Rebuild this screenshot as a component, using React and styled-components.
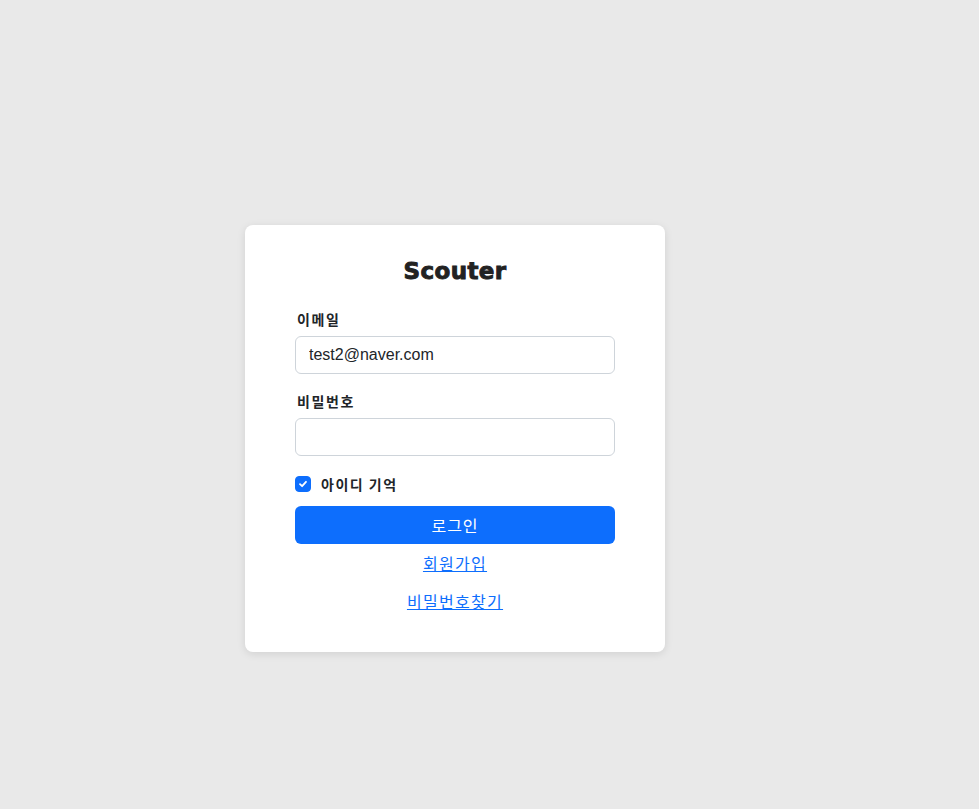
import React, { useState } from 'react'
import styled, { createGlobalStyle } from 'styled-components'

const GlobalStyle = createGlobalStyle`
  html, body {
    margin: 0;
    padding: 0;
    background: #e9e9e9;
    font-family: "Liberation Sans", "Noto Sans CJK KR", sans-serif;
    color: #212529;
  }
`

const Page = styled.div`
  min-height: 809px;
  padding: 225px 0 0 245px;
  box-sizing: border-box;
`

const Card = styled.form`
  width: 420px;
  box-sizing: border-box;
  padding: 32px 50px 39px;
  background: #fff;
  border-radius: 8px;
  box-shadow: 0 2px 8px rgba(0, 0, 0, 0.1);
  display: flex;
  flex-direction: column;
`

const Title = styled.h1`
  margin: 0 0 25px;
  text-align: center;
  font-family: "DejaVu Sans", sans-serif;
  font-size: 23px;
  font-weight: 700;
  letter-spacing: 0.4px;
  line-height: 28px;
  color: #222;
  -webkit-text-stroke: 0.9px #222;
`

const Field = styled.div`
  display: flex;
  flex-direction: column;
  margin-bottom: 18px;
`

const Label = styled.label`
  font-family: "Noto Sans CJK KR", sans-serif;
  font-size: 14px;
  font-weight: 700;
  line-height: 20px;
  margin: -1px 0 7px;
  padding-left: 2px;
  letter-spacing: 1.6px;
`

const Input = styled.input`
  height: 38px;
  box-sizing: border-box;
  padding: 6px 13px;
  border: 1px solid #ced4da;
  border-radius: 6px;
  font-family: "Liberation Sans", sans-serif;
  font-size: 16px;
  color: #212529;
  outline: none;
`

const CheckRow = styled.label`
  display: flex;
  align-items: center;
  gap: 10px;
  margin: 2px 0 14px;
  font-family: "Noto Sans CJK KR", sans-serif;
  font-size: 14px;
  font-weight: 700;
  letter-spacing: 1.5px;
  line-height: 16px;
  cursor: pointer;
`

const Box = styled.span`
  width: 16px;
  height: 16px;
  border-radius: 4px;
  background: ${(p) => (p.$on ? '#0d6efd' : '#fff')};
  border: 1px solid ${(p) => (p.$on ? '#0d6efd' : '#ced4da')};
  box-sizing: border-box;
  display: flex;
  align-items: center;
  justify-content: center;
`

const Button = styled.button`
  height: 38px;
  border: none;
  border-radius: 6px;
  background: #0d6efd;
  color: #fff;
  font-family: "Noto Sans CJK KR", sans-serif;
  font-size: 16px;
  font-weight: 400;
  letter-spacing: 1px;
  cursor: pointer;
`

const LinkText = styled.a`
  align-self: center;
  margin-top: ${(p) => p.$top}px;
  font-family: "Noto Sans CJK KR", sans-serif;
  font-size: 16px;
  line-height: 24px;
  letter-spacing: 1.3px;
  color: #0d6efd;
  text-decoration: underline;
`

export default function App() {
  const [remember, setRemember] = useState(true)
  return (
    <Page>
      <GlobalStyle />
      <Card onSubmit={(e) => e.preventDefault()}>
        <Title>Scouter</Title>
        <Field>
          <Label>이메일</Label>
          <Input type="email" defaultValue="test2@naver.com" />
        </Field>
        <Field>
          <Label>비밀번호</Label>
          <Input type="password" />
        </Field>
        <CheckRow onClick={() => setRemember(!remember)}>
          <Box $on={remember}>
            {remember && (
              <svg width="10" height="10" viewBox="0 0 10 10">
                <path d="M2 5.2 L4.1 7.2 L8 2.8" fill="none" stroke="#fff" strokeWidth="1.8" strokeLinecap="round" strokeLinejoin="round" />
              </svg>
            )}
          </Box>
          아이디 기억
        </CheckRow>
        <Button type="submit">로그인</Button>
        <LinkText href="#" $top={7}>회원가입</LinkText>
        <LinkText href="#" $top={14}>비밀번호찾기</LinkText>
      </Card>
    </Page>
  )
}
